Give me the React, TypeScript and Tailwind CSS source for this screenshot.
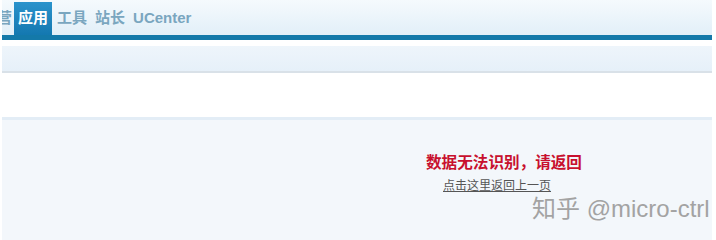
const tabs = ['工具', '站长', 'UCenter']

export default function App() {
  return (
    <div
      className="h-[240px] w-[716px] overflow-hidden bg-white"
      style={{ fontFamily: '"Liberation Sans", "Noto Sans CJK SC", sans-serif' }}
    >
      <div className="pl-[2px] pr-[4px]">
        {/* top nav */}
        <div className="flex h-[35px] items-end overflow-hidden bg-gradient-to-b from-[#f5fafd] to-[#e2eff8]">
          <div className="ml-[-5px] flex h-[33px] items-center pr-[2px] text-[15px] font-bold text-[#7aa6bf]">营</div>
          <div className="flex h-[33px] items-center bg-gradient-to-b from-[#2a93cc] to-[#1478b0] px-[4px] text-[15px] font-bold text-white">
            应用
          </div>
          <div className="w-[1px]" />
          {tabs.map((t) => (
            <div key={t} className="flex h-[33px] items-center px-[4px] text-[15px] font-bold text-[#7aa6bf]">
              {t}
            </div>
          ))}
        </div>
        <div className="h-[5px] bg-[#1479a9]" />
        <div className="h-[6px] bg-white" />
        <div className="h-[27px] border-b-2 border-[#d9e1e8] bg-gradient-to-b from-[#eef5fb] to-[#e6f0f9]" />
        <div className="h-[44px] bg-white" />
        <div className="h-[3px] bg-[#e3edf6]" />
        <div className="flex h-[120px] flex-col bg-[#f3f7fb] pl-[424px]">
          <div className="mt-[33px] text-[15.6px] font-bold leading-[20px] text-[#c8102e]">数据无法识别，请返回</div>
          <a className="ml-[17px] mt-[5px] text-[12px] leading-[16px] text-[#555] underline">点击这里返回上一页</a>
          <div className="ml-[106px] mt-[1px] text-[24px] leading-[28px] text-[#a3a3a3]">
            知乎 @micro-ctrl
          </div>
        </div>
      </div>
    </div>
  )
}
